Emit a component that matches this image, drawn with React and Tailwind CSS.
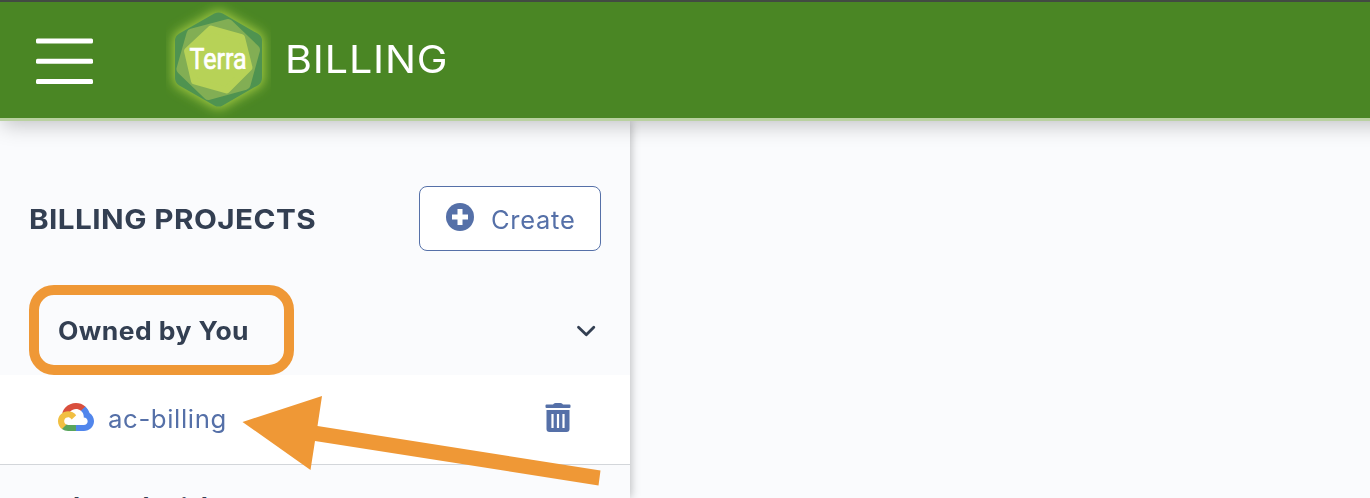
function MenuIcon() {
  return (
    <svg width="57" height="46" viewBox="0 0 57 46" fill="#fff">
      <rect y="0.5" width="57" height="5" rx="1.5" />
      <rect y="20.8" width="57" height="5" rx="1.5" />
      <rect y="41" width="57" height="5" rx="1.5" />
    </svg>
  )
}

function TerraLogo() {
  return (
    <svg width="105" height="116" viewBox="166 2 105 116">
      <defs>
        <filter id="glow" x="-30%" y="-30%" width="160%" height="160%">
          <feGaussianBlur stdDeviation="6" />
        </filter>
      </defs>
      <path d="M218.500 18 L256 39.500 V79.500 L218.500 101 L181 79.500 V39.500 Z" fill="#a9cf45" stroke="#a9cf45" strokeWidth="15" strokeLinejoin="round" filter="url(#glow)" />
      <path d="M218.500 21 L253.500 41 V78 L218.500 98 L183.500 78 V41 Z" fill="#4f9350" stroke="#4f9350" strokeWidth="17" strokeLinejoin="round" />
      <path d="M228 24.500 L254.500 50 L245 84.500 L208.500 94.500 L182 69 L192 34 Z" fill="#82ae54" stroke="#82ae54" strokeWidth="11" strokeLinejoin="round" />
      <path d="M211 29 L241.500 37.500 L249 67.500 L226.500 90 L194.500 81 L187.500 51 Z" fill="#b7d257" stroke="#b7d257" strokeWidth="7" strokeLinejoin="round" />
      <text x="189.500" y="69" textLength="57" lengthAdjust="spacingAndGlyphs" fill="#fff" fontFamily="Roboto, sans-serif" fontSize="29" fontWeight="400" stroke="#fff" strokeWidth="0.7">Terra</text>
    </svg>
  )
}

function GoogleCloudIcon() {
  return (
    <svg width="36" height="28" viewBox="0 0 256 206" preserveAspectRatio="none">
      <path fill="#d94f3d" d="M170.250 56.820L192.500 34.570L193.990 25.200C153.440-11.680 88.980-7.500 52.420 33.920C42.270 45.420 34.730 59.760 30.720 74.570L38.690 73.450L83.190 66.110L86.630 62.600C106.420 40.850 139.900 37.930 162.760 56.430Z" />
      <path fill="#5186ec" d="M224.200 73.920C219.090 55.080 208.590 38.150 193.990 25.200L162.760 56.430C175.940 67.200 183.460 83.440 183.130 100.470V106.010C198.490 106.010 210.930 118.450 210.930 133.810C210.930 149.160 198.490 161.290 183.130 161.290H127.460L122 167.220V200.560L127.460 205.800H183.130C223.060 206.110 255.690 174.300 256 134.370C256.190 110.170 244.250 87.480 224.200 73.920Z" />
      <path fill="#58a55c" d="M71.870 205.800H127.460V161.290H71.870C67.910 161.290 64.070 160.440 60.470 158.790L52.580 161.210L30.180 183.460L28.220 191.040C40.790 200.530 56.120 205.860 71.870 205.800Z" />
      <path fill="#f1bf42" d="M71.870 61.430C31.940 61.660-.24 94.230 0 134.160C.13 156.460 10.550 177.450 28.220 191.040L60.470 158.790C46.480 152.470 40.260 136.010 46.580 122.020C52.900 108.030 69.370 101.810 83.360 108.130C89.520 110.910 94.460 115.850 97.250 122.020L129.490 89.770C115.770 71.830 94.450 61.340 71.870 61.430Z" />
    </svg>
  )
}

function PlusIcon() {
  return (
    <svg width="28" height="28" viewBox="0 0 28 28">
      <circle cx="14" cy="14" r="14" fill="#5570a8" />
      <path d="M14 6V22M6 14H22" stroke="#fff" strokeWidth="5" />
    </svg>
  )
}

function TrashIcon() {
  return (
    <svg width="26" height="29" viewBox="0 0 26 29">
      <path fill="#5570a8" d="M1.500 1.500H8L9 .6Q9.500 0 10.500 0H15.500Q16.500 0 17 .6L18 1.500H24.500Q25.500 1.500 25.500 2.500V4Q25.500 5 24.500 5H1.500Q.5 5 .5 4V2.500Q.5 1.500 1.500 1.500Z" />
      <path fill="#5570a8" d="M1.500 7H24.500V26Q24.500 29 21.500 29H4.500Q1.500 29 1.500 26Z" />
      <path d="M7.500 11V25M13 11V25M18.500 11V25" stroke="#fff" strokeWidth="2.200" />
    </svg>
  )
}

function ChevronIcon() {
  return (
    <svg width="20" height="12" viewBox="0 0 20 12" fill="none" stroke="#333f52" strokeWidth="2.800" strokeLinecap="round" strokeLinejoin="round">
      <path d="M2.500 2.200L10.300 9.800L17.800 2.200" />
    </svg>
  )
}

export default function App() {
  return (
    <div className="relative flex h-[498px] w-[1370px] flex-col overflow-hidden bg-[#fafbfd] font-['Inter',sans-serif] text-[#333f52]">
      <header className="relative z-20 flex h-[121px] w-[1400px] shrink-0 items-center border-t-2 border-b-3 border-t-[#424a42] border-b-[#b9d1a0] bg-[#4a8624] shadow-[0_6px_20px_-2px_rgba(0,0,0,0.23)]">
        <button className="ml-9 pt-0.5" aria-label="Menu">
          <MenuIcon />
        </button>
        <div className="ml-[73px]">
          <TerraLogo />
        </div>
        <h1 className="-mt-0.5 ml-[14px] origin-left scale-x-[1.07] text-[38.5px] leading-none tracking-[0.8px] text-white">BILLING</h1>
      </header>

      <div className="flex min-h-0 flex-1">
        <aside className="z-10 w-[630px] shrink-0 bg-[#fafbfd] shadow-[1px_0_9px_rgba(0,0,0,0.26)]">
          <div className="flex h-[165px] items-start justify-between pt-[65px] pr-[29px] pl-[29px]">
            <h2 className="origin-left scale-x-[1.08] pt-4 text-[27.5px] leading-[34px] font-bold tracking-[0.4px] whitespace-nowrap">BILLING PROJECTS</h2>
            <button className="flex h-[65px] w-[182px] items-center rounded-lg border border-[#5570a8] bg-white pl-[26px] text-[#5570a8]">
              <span className="-mt-[3px]">
                <PlusIcon />
              </span>
              <span className="ml-[17px] origin-left scale-x-[1.02] pt-0.5 text-[25px] leading-8 tracking-[0.7px]">Create</span>
            </button>
          </div>

          <div className="flex h-[89px] items-center justify-between pr-[34px] pl-[29px]">
            <div className="-mt-px flex h-[90px] w-[265px] shrink-0 items-center rounded-[25px] border-10 border-[#ef9836] pl-[19px]">
              <span className="origin-left scale-x-[1.06] pt-0.5 text-[25px] leading-8 font-bold tracking-[0.4px] whitespace-nowrap">Owned by You</span>
            </div>
            <span className="pt-px">
              <ChevronIcon />
            </span>
          </div>

          <div className="flex h-[90px] items-center border-b border-[#d3d6da] bg-white pr-[59px] pl-[58px]">
            <span className="-mt-[5px]">
              <GoogleCloudIcon />
            </span>
            <span className="-mt-0.5 ml-[14px] origin-left scale-x-[1.03] text-[25px] leading-8 tracking-[0.6px] text-[#5570a8]">ac-billing</span>
            <span className="-mt-1 ml-auto">
              <TrashIcon />
            </span>
          </div>

          <div className="pt-[25px] pl-[58px] font-['Open_Sans',sans-serif] text-[25px] leading-8 font-bold tracking-[0.9px]">Shared with You</div>
        </aside>
        <main className="flex-1" />
      </div>

      {/* pointer to the project link */}
      <svg className="absolute top-[390px] left-[240px] z-30" width="370" height="100" viewBox="240 390 370 100">
        <path d="M242.500 422L322 396L317.500 426L600.500 470.500L598.500 485.500L315 441L310.500 470Z" fill="#ef9836" />
      </svg>
    </div>
  )
}
